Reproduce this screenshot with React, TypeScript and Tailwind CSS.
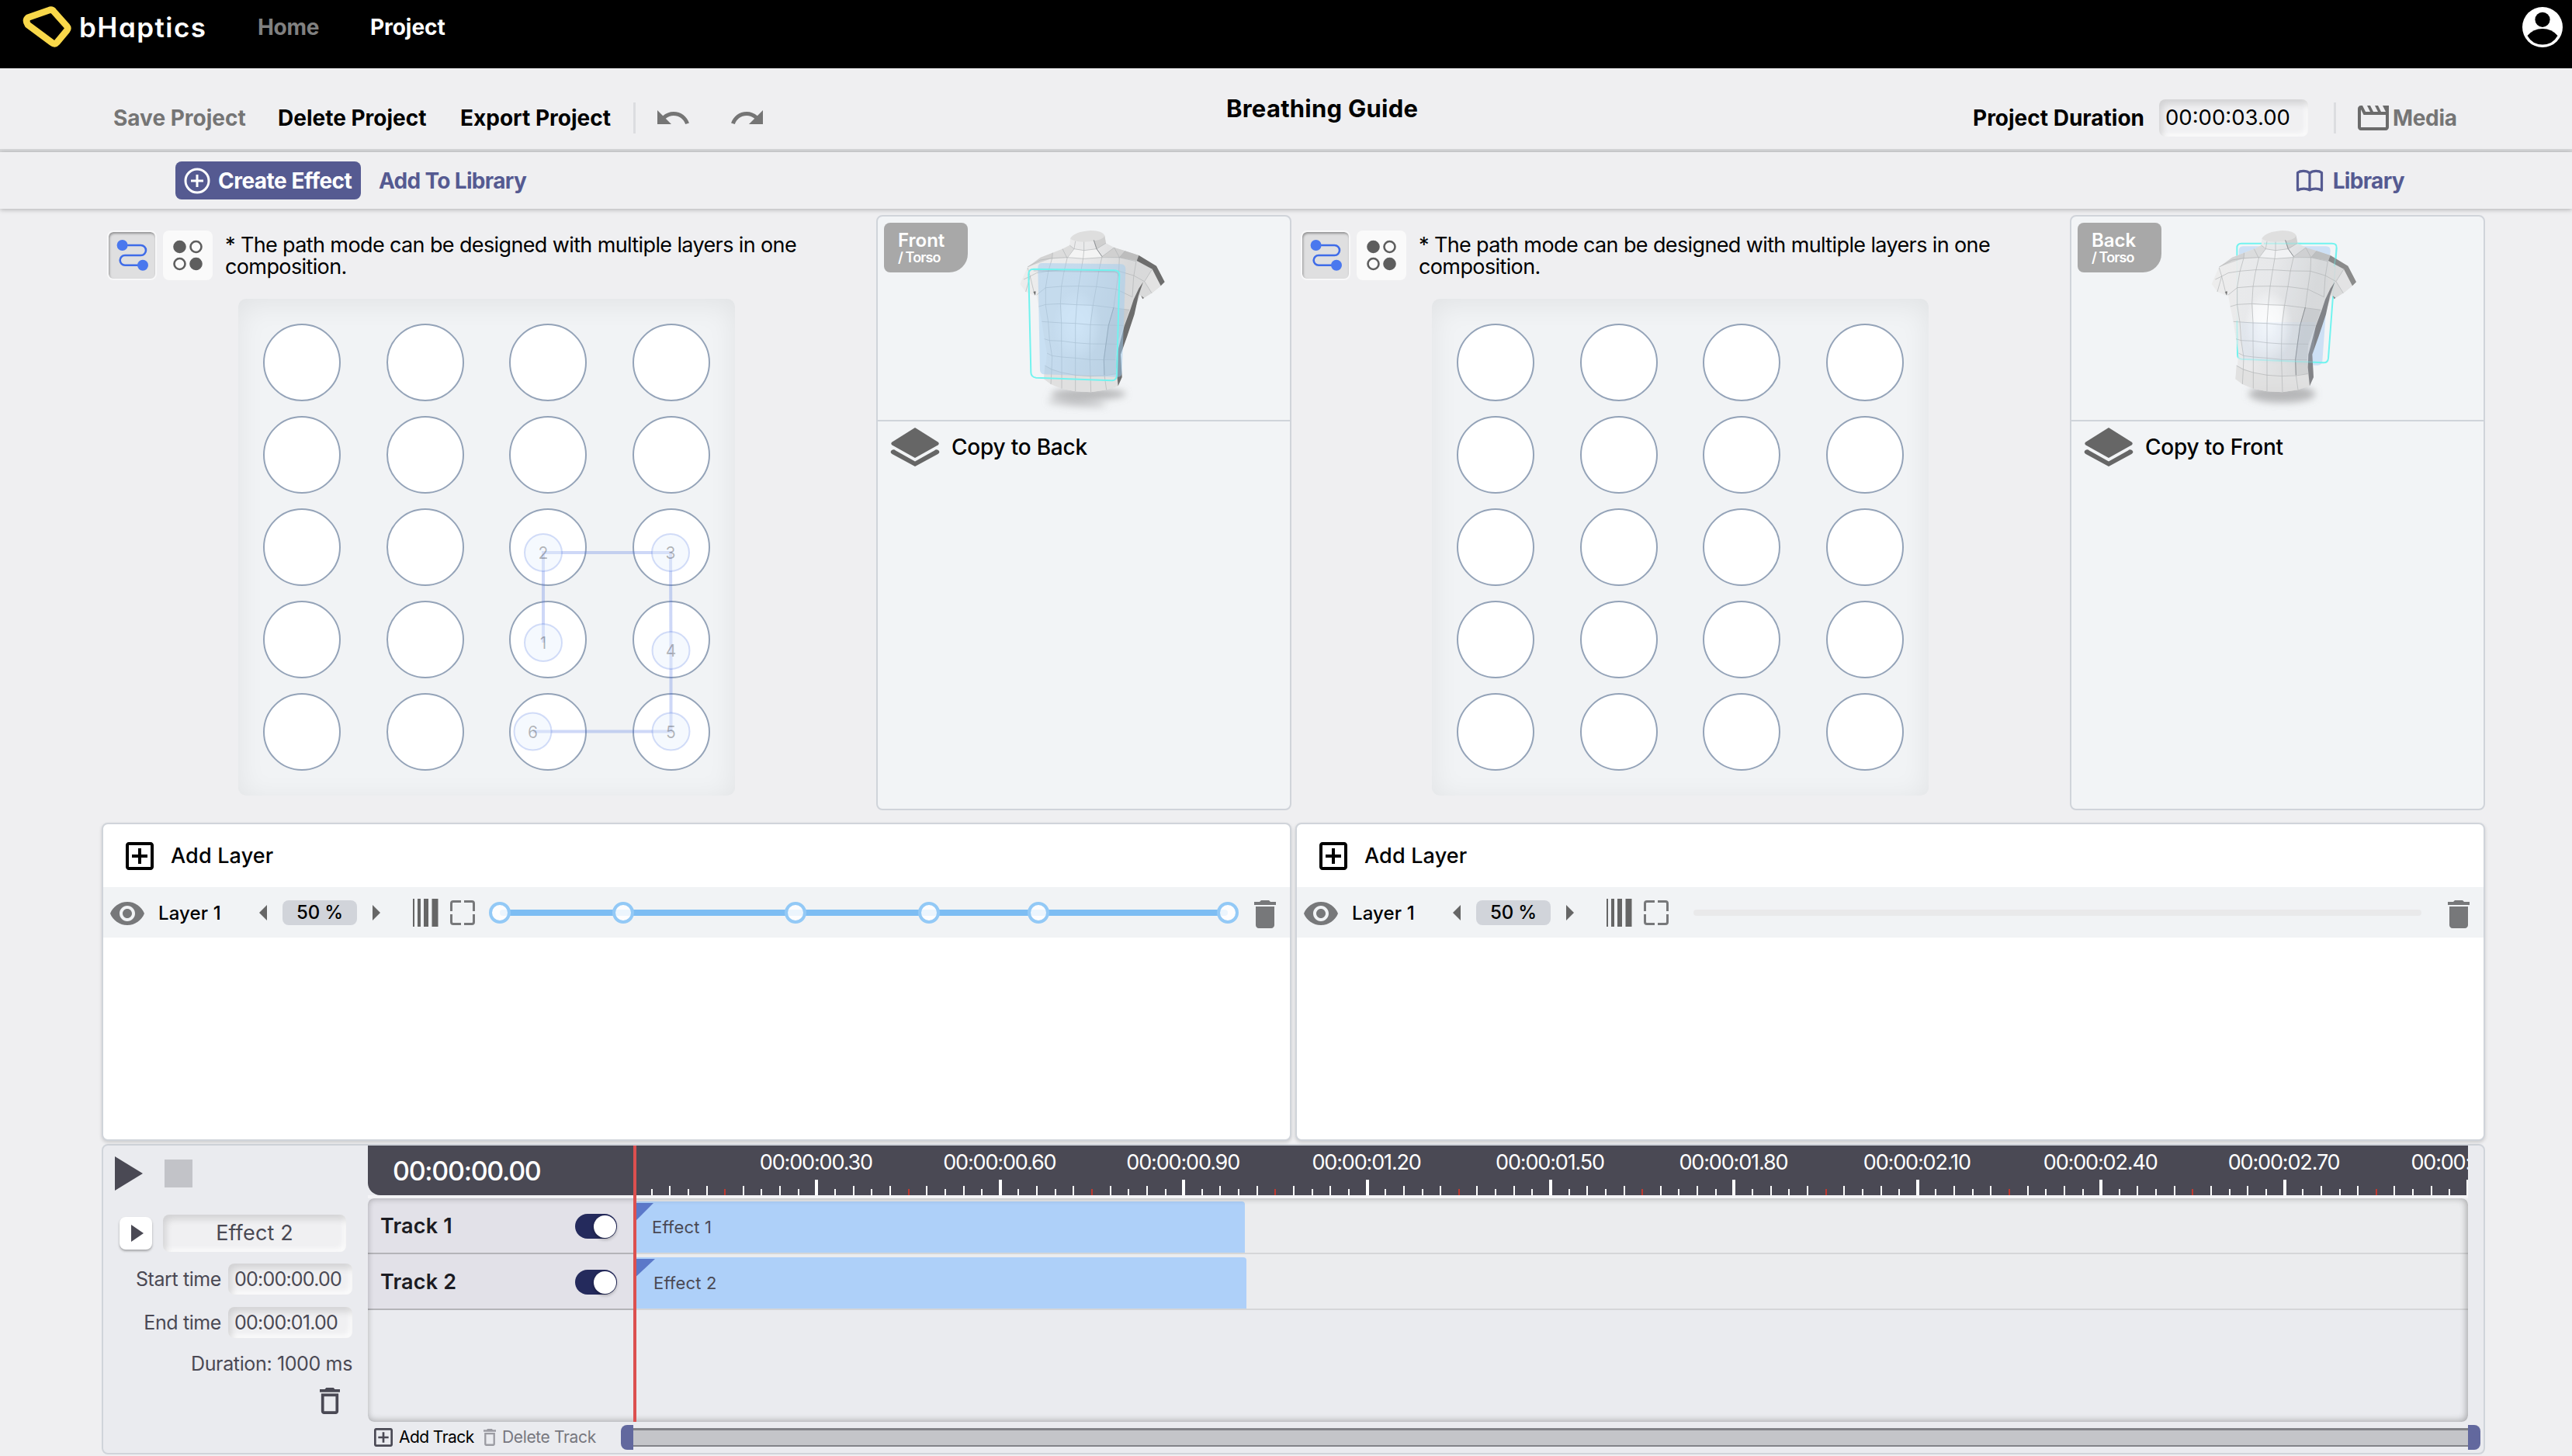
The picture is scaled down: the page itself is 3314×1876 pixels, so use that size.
import React from "react";

const UNDO =
  "M12.5 8c-2.65 0-5.05.99-6.9 2.6L2 7v9h9l-3.62-3.62c1.39-1.16 3.16-1.88 5.12-1.88 3.54 0 6.55 2.31 7.6 5.5l2.37-.78C21.08 11.03 17.15 8 12.5 8z";
const MOVIE =
  "M4 6.47L5.76 10H20v8H4V6.47M22 4h-4l2 4h-3l-2-4h-2l2 4h-3l-2-4H8l2 4H7L5 4H4c-1.1 0-1.99.9-1.99 2L2 18c0 1.1.9 2 2 2h16c1.1 0 2-.9 2-2V4z";
const EYE =
  "M12 4.5C7 4.5 2.73 7.61 1 12c1.73 4.39 6 7.5 11 7.5s9.27-3.11 11-7.5c-1.73-4.39-6-7.5-11-7.5zM12 17c-2.76 0-5-2.24-5-5s2.24-5 5-5 5 2.24 5 5-2.24 5-5 5zm0-8c-1.66 0-3 1.34-3 3s1.34 3 3 3 3-1.34 3-3-1.34-3-3-3z";
const TRASH = "M6 19c0 1.1.9 2 2 2h8c1.1 0 2-.9 2-2V7H6v12zM19 4h-3.5l-1-1h-5l-1 1H5v2h14V4z";
const TRASH_OUTLINE =
  "M6 19c0 1.1.9 2 2 2h8c1.1 0 2-.9 2-2V7H6v12zM8 9h8v10H8V9zm7.5-5l-1-1h-5l-1 1H5v2h14V4h-3.5z";
const ADD_BOX =
  "M19 3H5c-1.11 0-2 .9-2 2v14c0 1.1.89 2 2 2h14c1.1 0 2-.9 2-2V5c0-1.1-.9-2-2-2zm0 16H5V5h14v14zm-8-2h2v-4h4v-2h-4V7h-2v4H7v2h4z";

const INSET =
  "rounded-lg bg-[#f0f0f2] shadow-[inset_4px_6px_8px_rgba(0,0,0,0.12),inset_-4px_-4px_6px_rgba(255,255,255,0.75)]";

function Glyph({ d, box, className }: { d: string; box: string; className: string }) {
  return (
    <svg viewBox={box} preserveAspectRatio="none" className={`shrink-0 fill-current ${className}`}>
      <path d={d} />
    </svg>
  );
}

function Header() {
  return (
    <header className="h-[88px] shrink-0 bg-black">
      <div className="flex h-[70px] items-center pl-[29px] pr-3">
        <svg viewBox="29 7 64 56" className="h-14 w-16 shrink-0">
          <path
            d="M36.5 22.5 63 13.2Q67 11.600 69.500 15L86 33.500Q88.500 36.500 86 39.500L73.500 54.500Q70.500 58 67 55L36 32Q32 26 36.500 22.500Z"
            fill="none"
            stroke="#f9d84a"
            strokeWidth="8.6"
            strokeLinejoin="round"
          />
        </svg>
        <span className="ml-[9px] w-[230px] text-[35px] font-semibold tracking-[0.042em] text-white [font-feature-settings:'cv11']">
          bHaptics
        </span>
        <span className="w-[145px] text-[28px] font-bold tracking-[-0.012em] text-[#808080]">Home</span>
        <span className="text-[28px] font-bold tracking-[-0.002em] text-white">Project</span>
        <svg viewBox="-26 -26 52 52" className="ml-auto size-[52px]">
          <circle r="26" fill="#fff" />
          <circle cy="-9.7" r="9.6" />
          <path d="M-19.5 11Q-12 2 0 2Q12 2 19.5 11A22.3 22.3 0 0 1 -19.5 11Z" />
        </svg>
      </div>
    </header>
  );
}

function Toolbar() {
  return (
    <div className="flex h-[108px] shrink-0 items-center border-b-4 border-[#d7d8da] pt-6 text-[28px] font-bold">
      <div className="flex w-[1580px] items-center pl-[146px]">
        <span className="w-[212px] text-[#757575]">Save Project</span>
        <span className="w-[235px]">Delete Project</span>
        <span className="w-[223px]">Export Project</span>
        <span className="h-10 w-[3px] bg-[#dcdde0]" />
        <Glyph d={UNDO} box="0 0 24 24" className="ml-6 size-12 text-[#757575]" />
        <Glyph d={UNDO} box="0 0 24 24" className="ml-12 size-12 -scale-x-100 text-[#757575]" />
      </div>
      <h1 className="-mt-[23px] w-[962px] text-[31px] tracking-[0.008em]">Breathing Guide</h1>
      <span className="w-[240px]">Project Duration</span>
      <div className={`flex h-12 w-[192px] items-center pl-2 text-[27.5px] font-normal ${INSET}`}>00:00:03.00</div>
      <span className="ml-[33px] h-10 w-[3px] bg-[#dcdde0]" />
      <Glyph d={MOVIE} box="2 4 20 16" className="ml-7 h-8 w-10 text-[#6b6b6b]" />
      <span className="ml-[5px] tracking-[-0.012em] text-[#757575]">Media</span>
    </div>
  );
}

function ActionBar() {
  return (
    <div className="flex h-[73px] shrink-0 items-center pl-[226px] text-[28px] font-bold text-[#555a91] shadow-[0_1px_6px_rgba(0,0,0,0.28)]">
      <button className="flex h-[49px] w-[239px] items-center rounded-lg bg-[#555a91] pl-[11px] text-white">
        <svg viewBox="0 0 34 34" className="size-[34px]" fill="none" stroke="#fff" strokeWidth="3">
          <circle cx="17" cy="17" r="15" />
          <path d="M17 9v16M9 17h16" />
        </svg>
        <span className="ml-[10px] whitespace-nowrap tracking-[-0.018em]">Create Effect</span>
      </button>
      <span className="ml-[23px] tracking-[-0.024em]">Add To Library</span>
      <div className="ml-auto mr-[216px] flex items-center">
        <svg viewBox="0 0 36 30" className="h-[30px] w-9" fill="none" stroke="currentColor" strokeWidth="3.200" strokeLinejoin="round">
          <path d="M18 5C14 1.600 6 1.600 2.500 4.500V27C7 24.400 14 24.400 18 27C22 24.400 29 24.400 33.500 27V4.500C30 1.600 22 1.600 18 5ZM18 5V27" />
        </svg>
        <span className="ml-[12px] tracking-[-0.024em]">Library</span>
      </div>
    </div>
  );
}

/* Torso drawing: every line is one row or column of the mesh. */
const MESH = [
  "172,137 170,158 155,210 145,270 145,340 155,405 160,475 170,540 168,590 165,645",
  "210,122 228,158 215,215 206,268 202,335 206,405 206,480 207,545 207,600 207,662",
  "293,95 293,128 290,158 282,205 272,268 265,338 260,410 260,485 260,673",
  "410,117 430,155 428,205 418,275 408,348 388,418 378,490 370,550 372,610 380,667",
  "452,130 428,158",
  "495,170 485,230 480,308",
  "260,92 255,122 228,158",
  "238,108 255,122 293,128 342,122 378,100",
  "410,117 363,152",
  "75,192 125,165 170,158 228,155 293,160 363,155 430,155 495,170",
  "60,240 85,228 110,215 155,208 215,203 282,203 350,207 428,208 485,225 527,248 557,200",
  "110,300 145,272 206,267 272,266 341,268 418,278 480,308",
  "118,345 145,337 202,334 265,338 328,340 408,350 468,358",
  "130,403 206,408 260,410 318,415 388,417 447,418",
  "140,470 160,476 206,478 260,485 316,489 420,490",
  "150,525 170,535 207,540 260,544 316,550 415,551",
  "142,573 168,588 207,600 260,610 316,614 372,612 418,605",
  "75,195 85,228 68,288",
  "85,228 102,298",
  "527,248 555,293",
];

function Torso({ back }: { back: boolean }) {
  const id = back ? "back" : "front";
  return (
    <svg viewBox="0 0 660 780" className="absolute top-[1px] left-[168px] h-[260px] w-[220px]">
      <defs>
        <linearGradient id={`${id}-body`} x1="0" x2="1" y1="0" y2="0.25">
          <stop offset="0" stopColor="#ededed" />
          <stop offset="0.45" stopColor="#e9e9ea" />
          <stop offset="0.75" stopColor="#d8d9da" />
          <stop offset="1" stopColor="#dadada" />
        </linearGradient>
        <radialGradient id={`${id}-glow`}>
          <stop offset="0" stopColor="#fff" stopOpacity="0.95" />
          <stop offset="0.5" stopColor="#fff" stopOpacity="0.6" />
          <stop offset="1" stopColor="#fff" stopOpacity="0" />
        </radialGradient>
        <filter id={`${id}-blur`} x="-30%" y="-80%" width="160%" height="260%">
          <feGaussianBlur stdDeviation="15" />
        </filter>
      </defs>
      <g fill="#8b8b8e" filter={`url(#${id}-blur)`}>
        <ellipse cx="310" cy="683" rx={back ? 130 : 145} ry={back ? 34 : 22} opacity="0.58" />
        {!back && <ellipse cx="265" cy="718" rx="115" ry="11" opacity="0.5" transform="rotate(4 265 718)" />}
      </g>
      {back && (
        <>
          <path d="M160 112H480Q498 112 497 130L466 556Q464 572 448 572L160 560Q143 558 143 540V130Q143 112 160 112Z" fill="#cde0f5" />
          <path d="M153 101H503Q522 101 521 118L489 545Q487 563 470 562L155 548Q138 546 138 530L136 118Q136 101 153 101Z" fill="none" stroke="#72f3ef" strokeWidth="6" />
        </>
      )}
      <g transform={back ? "translate(-8 0)" : undefined}>
        <g opacity={back ? 0.94 : 1}>
          <path
            d="M240 82L238 108L210 122L172 137L125 155L75 192L60 225L46 258L68 288L102 302L108 292L118 345L130 405L140 470L150 525L145 575L138 625L165 645L207 662L260 673L320 676L380 667L425 652L440 618L435 530L450 480L475 410L492 350L510 300L520 315L555 293L590 265L605 250L573 188L505 147L452 130L410 117L378 100L373 70Z"
            fill={`url(#${id}-body)`}
          />
          <path d="M172 137L210 122L238 108L255 122L228 156L125 165Z" fill="#dcdcdc" />
          <path d="M125 155L172 137L170 158L75 192Z" fill="#d2d2d2" />
          <path d="M410 117L452 130L430 155L363 152Z" fill="#d0d0d0" />
          <path d="M452 130L505 147L497 168L430 155Z" fill="#bdbdbd" />
          <path d="M228 156L255 122L293 128L342 122L363 154L293 160Z" fill="#f4f4f4" />
          <path d="M331 88L373 72L378 100L342 122Z" fill="#cfcfcf" />
          <path d="M408 350L468 358L447 420L420 490L415 551L370 550L378 490L388 418Z" fill="#c0c2c5" opacity="0.6" />
          <path d="M370 550L415 551L420 610L372 612Z" fill="#c8cacc" opacity="0.6" />
          <path d="M138 625L142 573L207 600L316 614L418 605L425 652L380 667L320 676L260 673L207 662L165 645Z" fill="#e0e0e0" />
          <path d="M527 248L557 200L590 265L555 293Z" fill="#e3e3e3" />
          <ellipse cx="266" cy="420" rx="95" ry="140" fill={`url(#${id}-glow)`} />
          <path d="M206 338L265 338L322 341L316 414L260 410L206 407Z" fill="#fff" opacity="0.6" />
          <path d="M240 82Q255 55 320 51Q365 52 373 70Q370 92 292 95Q250 94 240 82Z" fill="#dedede" />
          <path d="M505 147L573 188L605 250L590 265L557 200L497 168Z" fill={back ? "#858585" : "#6d6d6d"} />
          <path
            d="M522 250L505 275L485 318L472 358L449 420L428 500L420 530L418 580L425 652L440 618L435 530L460 460L488 375L503 305Z"
            fill={back ? "#7d7e82" : "#6d6d6d"}
          />
          <path d="M97 288L106 286L105 302Z" fill="#555" />
          <path d="M514 303L520 316L525 311Z" fill="#777" />
        </g>
        <g fill="none" stroke="#b0b3b5" strokeWidth="2">
          {MESH.map((points) => (
            <polyline key={points} points={points} />
          ))}
          <polyline points="331,88 342,122 363,152 350,210 341,268 328,340 318,415 316,490 316,550 320,676" />
          <g stroke="#84888b" strokeWidth="2.5">
            <polyline points="331,88 342,122 363,152" />
            <polyline points="408,348 388,418 378,490 370,550 372,610" />
          </g>
        </g>
      </g>
      {back ? (
        <g fill="none">
          <path d="M240 101H385M512 190L521 118M136 400L138 530Q138 546 155 548L470 562" stroke="#72f3ef" strokeWidth="6" opacity="0.35" />
          <path d="M150 405H440L430 560L160 550Z" fill="#b9d8f7" opacity="0.14" />
        </g>
      ) : (
        <>
          <path d="M132 177L436 181Q454 182 454 200L440 600Q439 618 424 617L140 607Q124 606 123 590L115 194Q115 177 132 177Z" fill="#9fccef" opacity="0.5" />
          <path d="M98 206L412 211Q428 212 428 228" fill="none" stroke="#8296a8" strokeWidth="6" opacity="0.25" />
          <path d="M98 200L412 205Q431 206 430 225L420 612Q418 632 400 631L108 620Q89 618 88 600L79 220Q79 200 98 200Z" fill="none" stroke="#72f3ef" strokeWidth="6" />
        </>
      )}
    </svg>
  );
}

const POINTS: [number, number][] = [
  [393, 443],
  [393, 327],
  [557, 327],
  [557.5, 453],
  [557.5, 557.5],
  [379.5, 557.5],
];

function MotorPad({ path }: { path: boolean }) {
  return (
    <div className="relative mt-6 ml-[176px] grid size-[640px] grid-cols-[repeat(4,100px)] content-between justify-between rounded-[10px] bg-[#f1f3f5] p-8 shadow-[inset_0_6px_36px_rgba(0,0,0,0.07)]">
      {Array.from({ length: 20 }, (_, i) => (
        <div key={i} className="size-[100px] rounded-full border-2 border-[#94a3b8] bg-white" />
      ))}
      {path && (
        <svg viewBox="0 0 640 640" className="absolute inset-0 size-full">
          <polyline
            points={POINTS.map((p) => p.join(",")).join(" ")}
            fill="none"
            stroke="#4169e1"
            strokeOpacity="0.26"
            strokeWidth="4"
          />
          {POINTS.map(([x, y], i) => (
            <g key={i}>
              <circle cx={x} cy={y} r="24" fill="#e6f0fd" fillOpacity="0.4" stroke="#4169e1" strokeOpacity="0.22" strokeWidth="2" />
              <text x={x} y={y + 8} textAnchor="middle" fontSize="21" fill="#000" fillOpacity="0.28">
                {i + 1}
              </text>
            </g>
          ))}
        </svg>
      )}
    </div>
  );
}

function EffectEditor({ side, other, path }: { side: string; other: string; path: boolean }) {
  return (
    <section className="flex h-[767px]">
      <div className="w-[998px]">
        <div className="flex pt-5 pl-[7px]">
          <div className="flex size-16 items-center justify-center rounded-lg border-2 border-[#f8f8f9] bg-[#dfdfe0] shadow-[inset_1px_2px_3px_rgba(0,0,0,0.35)]">
            <svg viewBox="148 307 44 44" className="size-11" fill="none" stroke="#3f6ce8" strokeWidth="2.6">
              <path d="M158 316H181.500A6.500 6.500 0 0 1 181.500 329H161A6.300 6.300 0 0 0 161 341.700H184" />
              <circle cx="157.600" cy="316" r="7" fill="#4a78ee" stroke="none" />
              <circle cx="184" cy="341.700" r="7" fill="#4a78ee" stroke="none" />
            </svg>
          </div>
          <div className="ml-2 flex size-16 items-center justify-center rounded-lg bg-[#fafafa]">
            <svg viewBox="0 0 40 40" className="size-10" stroke="#5e5e5e" strokeWidth="2.6">
              <circle cx="9.500" cy="9" r="7" fill="#5e5e5e" />
              <circle cx="30.500" cy="9" r="7" fill="none" />
              <circle cx="9.500" cy="31" r="7" fill="none" />
              <circle cx="30.500" cy="31" r="7" fill="#5e5e5e" />
            </svg>
          </div>
          <p className="mt-[5px] ml-4 w-[760px] text-[27px] leading-[28px] tracking-[-0.023em]">
            * The path mode can be designed with multiple layers in one composition.
          </p>
        </div>
        <MotorPad path={path} />
      </div>
      <div className="w-[535px] rounded-lg border-2 border-[#d0d4da] bg-[#f2f4f6]">
        <div className="relative h-[264px] border-b-2 border-[#d0d4da] pt-2 pl-2">
          <div className="h-16 w-[108px] rounded-[8px] rounded-br-[24px] bg-[#a8a8a8] pt-[9px] pl-[18px] font-semibold text-white">
            <div className="text-[24px] leading-[27px]">{side}</div>
            <div className="text-[18px] leading-[18px] tracking-[-0.05em]">/ Torso</div>
          </div>
          <Torso back={side === "Back"} />
        </div>
        <div className="flex h-[66px] items-center pl-4">
          <svg viewBox="0 0 64 50" className="h-[50px] w-16" fill="#666">
            <path d="M32 0 61.500 18.500Q64 20.500 61.500 22.500L32 39 2.500 22.500Q0 20.500 2.500 18.500Z" />
            <path d="M2 29Q5 27.500 7 29.500L32 43.500 57 29.500Q59 27.500 62 29Q65 32 61.500 34L32 50 2.500 34Q-1 32 2 29Z" />
          </svg>
          <span className="ml-[15px] text-[28px] font-medium tracking-[-0.008em]">Copy to {other}</span>
        </div>
      </div>
    </section>
  );
}

function LayerPanel({ stops }: { stops: number[] }) {
  return (
    <section className="h-[410px] rounded-lg border-2 border-[#d0d4da] bg-white shadow-[0_2px_4px_rgba(0,0,0,0.15)]">
      <div className="flex h-[81px] items-center pl-[29px]">
        <Glyph d={ADD_BOX} box="3 3 18 18" className="size-9" />
        <span className="mt-0.5 ml-[22px] text-[27px] font-medium tracking-[0.006em]">Add Layer</span>
      </div>
      <div className="flex h-[65px] items-center bg-[#f1f3f5] pl-[9px] text-[24px] font-medium">
        <Glyph d={EYE} box="1 4.500 22 15" className="mt-0.5 h-[30px] w-11 text-[#77787a]" />
        <span className="mt-0.5 ml-[18px] w-[130px] tracking-[0.006em]">Layer 1</span>
        <Glyph d="M10 0V20L0 10Z" box="0 0 10 20" className="h-5 w-2.5 text-[#666]" />
        <span className="mx-5 flex h-8 w-24 items-center justify-center rounded-lg bg-[#d1d4da] pt-px tracking-[-0.008em]">50 %</span>
        <Glyph d="M0 0V20L10 10Z" box="0 0 10 20" className="h-5 w-2.5 text-[#666]" />
        <Glyph d="M0 0h2v36h-2zM6 0h4v36h-4zM14 0h6v36h-6zM24.500 0h8v36h-8z" box="0 0 33 36" className="ml-[42px] h-9 w-[33px] text-[#666]" />
        <svg viewBox="0 0 32 32" className="ml-[15px] size-8" fill="none" stroke="#77787a" strokeWidth="3">
          <path d="M14 1.500H4Q1.500 1.500 1.500 4V14M18 1.500H28Q30.500 1.500 30.500 4V14M14 30.500H4Q1.500 30.500 1.500 28V18M18 30.500H28Q30.500 30.500 30.500 28V18" />
        </svg>
        <div className="relative ml-[32px] flex w-[938px] items-center">
          <div className={`h-2 w-full rounded-full ${stops.length ? "bg-[#7dbdf3]" : "bg-[#e9e9ea]"}`} />
          {stops.map((x) => (
            <span
              key={x}
              className="absolute size-7 -translate-x-1/2 rounded-full border-4 border-[#93c9f6] bg-white/85"
              style={{ left: x }}
            />
          ))}
        </div>
        <Glyph d={TRASH} box="5 3 14 18" className="mt-1 ml-[34px] h-9 w-7 text-[#77787a]" />
      </div>
    </section>
  );
}

function Ruler() {
  const minor = Array.from({ length: 100 }, (_, i) => i + 1);
  return (
    <div className="relative h-16 flex-1 overflow-hidden">
      {minor.map((i) => (
        <span
          key={i}
          className={`absolute bottom-0 ${
            i % 10 === 0 ? "h-5 w-1 bg-white" : i % 10 === 5 ? "h-2 w-0.5 bg-[#c0392f]" : i % 2 ? "h-2 w-0.5 bg-white" : "h-3 w-0.5 bg-white"
          }`}
          style={{ left: i * 23.64 - (i % 10 ? 1 : 2) }}
        />
      ))}
      {Array.from({ length: 10 }, (_, i) => i + 1).map((i) => (
        <span
          key={i}
          className="absolute top-[6px] -translate-x-1/2 text-[27px] leading-8 tracking-[-0.043em] text-white"
          style={{ left: i * 236.4 - 1 }}
        >
          00:00:0{Math.floor((i * 3) / 10)}.{(i * 3) % 10}0
        </span>
      ))}
    </div>
  );
}

function Track({ name, clip, wide }: { name: string; clip: string; wide: boolean }) {
  return (
    <div className="flex h-[72px]">
      <div className="flex w-[342px] items-center border-b-2 border-[#b4b4b8] bg-[#e2e1e8] pt-0.5 pr-[21px] pl-4">
        <span className="text-[27px] font-semibold tracking-[0.006em] text-[#1b1b22]">{name}</span>
        <span className="ml-auto flex h-8 w-[54px] items-center justify-end rounded-full bg-[#242a5c] pr-px">
          <span className="size-[29px] rounded-full bg-white shadow-[0_2px_4px_rgba(0,0,0,0.3)]" />
        </span>
      </div>
      <div className="flex-1 border-b-2 border-[#d5d6d8] bg-[#ebeced]/60 pt-1">
        <div
          className={`relative flex h-full items-center rounded-t-[4px] bg-[#aed0f9] pt-px text-[22px] tracking-[0.008em] text-[#4a4954] ${
            wide ? "w-[790px] pl-[26px]" : "w-[788px] pl-6"
          }`}
        >
          <svg viewBox="0 0 24 24" className={`absolute top-0.5 left-0 h-6 ${wide ? "w-[28px]" : "w-[26px]"}`} preserveAspectRatio="none">
            <path d="M0 0H24L2 24H0Z" fill="#5b78c9" />
          </svg>
          {clip}
        </div>
      </div>
    </div>
  );
}

function Timeline() {
  return (
    <section className="flex h-[400px] rounded-lg border-2 border-[#d0d4da] bg-[#eaebef] text-[#4a4954]">
      <div className="w-[341px]">
        <div className="flex h-[84px] items-start pt-3.5 pl-[15px]">
          <Glyph d="M0 0V44L36 22Z" box="0 0 36 44" className="h-11 w-9" />
          <span className="mt-1 ml-7 size-9 bg-[#c2c3c8]" />
        </div>
        <div className="flex h-[60px] items-center pl-[21px]">
          <button className="-mt-0.5 flex size-[42px] items-center justify-center rounded-lg bg-white shadow-[0_2px_3px_rgba(0,0,0,0.3)]">
            <Glyph d="M0 0V22L16 11Z" box="0 0 16 22" className="ml-1 h-[22px] w-4" />
          </button>
          <div className={`-mt-0.5 ml-[14px] flex h-12 w-[236px] items-center justify-center text-[27px] tracking-[0.006em] ${INSET}`}>
            Effect 2
          </div>
        </div>
        <div className="flex flex-col items-end gap-4 pt-2 pr-5 text-[25px]">
          {[
            ["Start time", "00:00:00.00"],
            ["End time", "00:00:01.00"],
          ].map(([label, value]) => (
            <div key={label} className="flex h-10 items-center">
              <span className="mt-0.5 mr-[9px] tracking-[-0.016em]">{label}</span>
              <div className={`flex h-10 w-40 items-center pt-0.5 pl-2 tracking-[-0.031em] ${INSET}`}>{value}</div>
            </div>
          ))}
          <span className="mt-[2px] h-[30px] leading-[30px] tracking-[-0.0144em]">Duration: 1000 ms</span>
          <Glyph d={TRASH_OUTLINE} box="5 3 14 18" className="mr-4 h-[34px] w-[26px]" />
        </div>
      </div>
      <div className="relative w-[2706px]">
        <div className="flex h-16 items-center rounded-bl-2xl bg-[#4a4954]">
          <span className="w-[342px] pl-8 text-[34px] font-medium tracking-[-0.038em] text-white">00:00:00.00</span>
          <Ruler />
        </div>
        <div className="h-1 bg-[#f4f4f6]" />
        <div className="relative h-72 overflow-hidden rounded-lg">
          <Track name="Track 1" clip="Effect 1" wide={false} />
          <Track name="Track 2" clip="Effect 2" wide />
          <div className="pointer-events-none absolute inset-0 rounded-lg shadow-[inset_-2px_0_10px_rgba(0,0,0,0.22),inset_0_-2px_8px_rgba(0,0,0,0.12)]" />
        </div>
        <span className="absolute top-0 left-[342px] h-[356px] w-1 bg-[#dc504f]" />
        <div className="flex h-10 items-center pl-2">
          <Glyph d={ADD_BOX} box="3 3 18 18" className="size-6" />
          <span className="ml-2 w-[96px] whitespace-nowrap text-[21px] tracking-[-0.027em] text-black">Add Track</span>
          <Glyph d={TRASH_OUTLINE} box="5 3 14 18" className="ml-[13px] h-[22px] w-4 text-[#9b9ba2]" />
          <span className="ml-2 w-[153px] text-[21px] tracking-[-0.017em] text-[#77777e]">Delete Track</span>
          <span className="h-8 w-4 shrink-0 rounded-l-lg bg-[#62689e]" />
          <span className="h-6 flex-1 border-t-[3px] border-b-2 border-[#828388] bg-[#c4c5c9]" />
          <span className="-mr-4 h-8 w-4 shrink-0 rounded-r-lg bg-[#62689e]" />
        </div>
      </div>
    </section>
  );
}

export default function App() {
  return (
    <div className="flex h-[1876px] w-[3314px] flex-col overflow-hidden bg-[#efeff1] font-['Inter',sans-serif] text-black">
      <Header />
      <Toolbar />
      <ActionBar />
      <main className="ml-[131px] w-[3071px] pt-2">
        <div className="grid grid-cols-2 gap-x-[5px] gap-y-4">
          <EffectEditor side="Front" other="Back" path />
          <EffectEditor side="Back" other="Front" path={false} />
          <LayerPanel stops={[0, 159, 381, 553, 694, 938]} />
          <LayerPanel stops={[]} />
        </div>
        <div className="mt-1">
          <Timeline />
        </div>
      </main>
    </div>
  );
}
